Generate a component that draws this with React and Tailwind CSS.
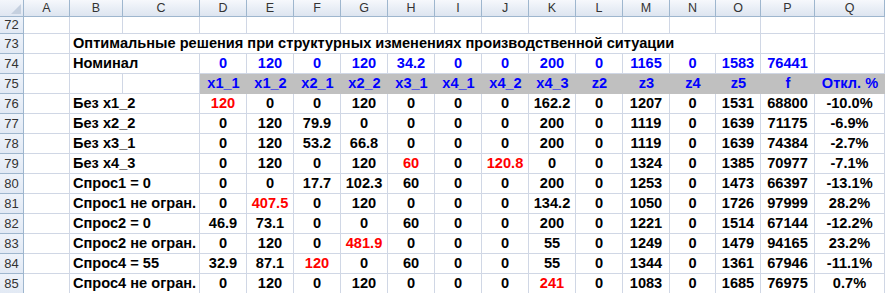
import React from "react";

const COLS = ["A","B","C","D","E","F","G","H","I","J","K","L","M","N","O","P","Q"];
const W = [46,53,77,47,47,47,47,47,47,47,47,47,47,46,45,54,70];

const nominal = ["0","120","0","120","34.2","0","0","200","0","1165","0","1583","76441",""];
const heads = ["x1_1","x1_2","x2_1","x2_2","x3_1","x4_1","x4_2","x4_3","z2","z3","z4","z5","f","Откл. %"];

const rows = [
  ["Без x1_2", ["120r","0","0","120","0","0","0","162.2","0","1207","0","1531","68800","-10.0%"]],
  ["Без x2_2", ["0","120","79.9","0","0","0","0","200","0","1119","0","1639","71175","-6.9%"]],
  ["Без x3_1", ["0","120","53.2","66.8","0","0","0","200","0","1119","0","1639","74384","-2.7%"]],
  ["Без x4_3", ["0","120","0","120","60r","0","120.8r","0","0","1324","0","1385","70977","-7.1%"]],
  ["Спрос1 = 0", ["0","0","17.7","102.3","60","0","0","200","0","1253","0","1473","66397","-13.1%"]],
  ["Спрос1 не огран.", ["0","407.5r","0","120","0","0","0","134.2","0","1050","0","1726","97999","28.2%"]],
  ["Спрос2 = 0", ["46.9","73.1","0","0","60","0","0","200","0","1221","0","1514","67144","-12.2%"]],
  ["Спрос2 не огран.", ["0","120","0","481.9r","0","0","0","55","0","1249","0","1479","94165","23.2%"]],
  ["Спрос4 = 55", ["32.9","87.1","120r","0","60","0","0","55","0","1344","0","1361","67946","-11.1%"]],
  ["Спрос4 не огран.", ["0","120","0","120","0","0","0","241r","0","1083","0","1685","76975","0.7%"]],
];

const font = { fontFamily: '"Liberation Sans", Arial, sans-serif' };

function RowHead({ n, h }) {
  return (
    <div
      className="shrink-0 w-[24px] flex items-center justify-center border-r border-b border-[#9eb6ce] bg-gradient-to-b from-[#eef3fa] to-[#e2e9f4] text-[13px] font-normal text-[#333333]"
      style={{ height: h }}
    >
      {n}
    </div>
  );
}

function Cell({ w, h, children, noRight, className = "" }) {
  return (
    <div
      className={`shrink-0 flex items-center whitespace-nowrap border-b border-[#d0d7e5] ${noRight ? "" : "border-r"} ${className}`}
      style={{ width: w, height: h }}
    >
      {children}
    </div>
  );
}

function Val({ v }) {
  const red = v.endsWith("r");
  const t = red ? v.slice(0, -1) : v;
  return <span className={red ? "text-[#ff0000]" : "text-black"}>{t}</span>;
}

export default function App() {
  return (
    <div className="w-[885px] h-[293px] overflow-hidden bg-white font-bold text-[14.6px]" style={font}>
      {/* column header */}
      <div className="flex h-[17px]">
        <div className="shrink-0 w-[24px] h-[17px] relative border-r border-b border-[#9eb6ce] bg-gradient-to-b from-[#f3f6fb] to-[#dfe6f1]">
          <svg className="absolute right-[2px] bottom-[2px]" width="10" height="10" viewBox="0 0 10 10">
            <polygon points="10,0 10,10 0,10" fill="#c5d0df" />
          </svg>
        </div>
        {COLS.map((c, i) => (
          <div
            key={c}
            className="shrink-0 h-[17px] flex items-center justify-center border-r border-b border-[#9eb6ce] bg-gradient-to-b from-[#f6f8fc] to-[#dde5f0] text-[12.5px] font-normal text-[#333333]"
            style={{ width: W[i] }}
          >
            {c}
          </div>
        ))}
      </div>

      {/* row 72 */}
      <div className="flex">
        <RowHead n="72" h={17} />
        {W.map((w, i) => (
          <Cell key={i} w={w} h={17} />
        ))}
      </div>

      {/* row 73 title */}
      <div className="flex">
        <RowHead n="73" h={20} />
        {W.map((w, i) => (
          <Cell key={i} w={w} h={20} noRight={i >= 1 && i <= 13}>
            {i === 1 ? (
              <span className="pl-[3px] text-black">
                Оптимальные решения при структурных изменениях производственной ситуации
              </span>
            ) : null}
          </Cell>
        ))}
      </div>

      {/* row 74 nominal */}
      <div className="flex">
        <RowHead n="74" h={20} />
        {W.map((w, i) => (
          <Cell key={i} w={w} h={20} noRight={i === 1} className={i >= 3 ? "justify-center text-[#0000ff]" : ""}>
            {i === 1 ? <span className="pl-[3px] text-black">Номинал</span> : i >= 3 ? nominal[i - 3] : null}
          </Cell>
        ))}
      </div>

      {/* row 75 headers */}
      <div className="flex">
        <RowHead n="75" h={20} />
        {W.map((w, i) =>
          i >= 3 ? (
            <div
              key={i}
              className="shrink-0 h-[20px] flex items-center justify-center bg-[#c0c0c0] text-[#0000ff] whitespace-nowrap"
              style={{ width: w }}
            >
              {heads[i - 3]}
            </div>
          ) : (
            <Cell key={i} w={w} h={20} />
          )
        )}
      </div>

      {/* data rows */}
      {rows.map(([label, vals], r) => (
        <div className="flex" key={r}>
          <RowHead n={String(76 + r)} h={20} />
          {W.map((w, i) => (
            <Cell key={i} w={w} h={20} noRight={i === 1} className={i >= 3 ? "justify-center" : ""}>
              {i === 1 ? (
                <span className="pl-[3px] text-black">{label}</span>
              ) : i >= 3 ? (
                <Val v={vals[i - 3]} />
              ) : null}
            </Cell>
          ))}
        </div>
      ))}
    </div>
  );
}
